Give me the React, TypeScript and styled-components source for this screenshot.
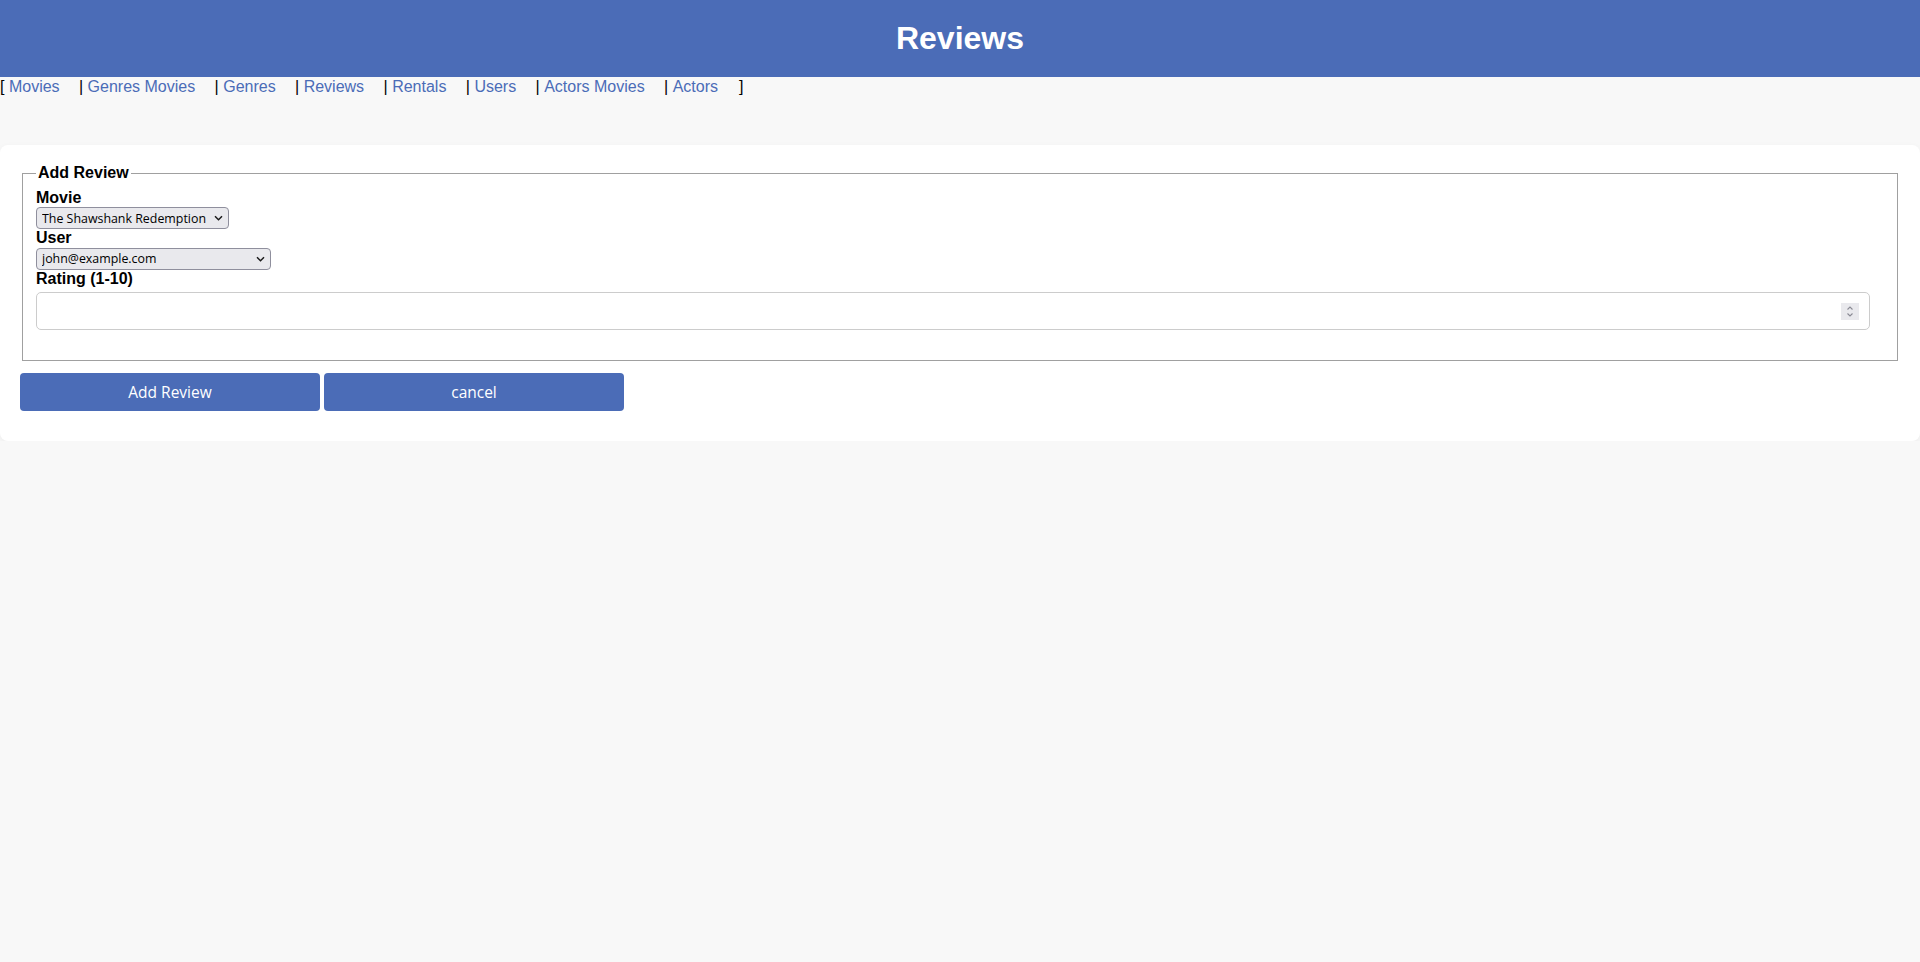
import React from "react";
import styled, { createGlobalStyle } from "styled-components";

const GlobalStyle = createGlobalStyle`
  html, body {
    margin: 0;
    padding: 0;
    background: #f8f8f8;
    font-family: "Liberation Sans", Arial, sans-serif;
    font-size: 16px;
    color: #000;
  }
`;

const Header = styled.header`
  background: #4b6cb7;
  padding: 20px 0;
  text-align: center;
`;

const Title = styled.h1`
  margin: 0;
  color: #fff;
  font-size: 32px;
  font-weight: bold;
  font-family: "Liberation Sans", Arial, sans-serif;
`;

const Nav = styled.nav`
  font-size: 16px;
  line-height: 18.4px;
  padding-top: 1px;
  white-space: nowrap;
`;

const NavLink = styled.a`
  color: #4b6cb7;
  text-decoration: none;
`;

const Sep = styled.span<{ $gap?: number }>`
  margin-left: ${(p) => p.$gap ?? 19.4}px;
`;

const Card = styled.main`
  margin-top: 49px;
  background: #fff;
  border-radius: 8px;
  box-shadow: 0 2px 6px rgba(0, 0, 0, 0.05);
  padding: 19px 20px 20px;
`;

const Fieldset = styled.fieldset`
  margin: 0 2px;
  padding: 6.6px 13px 11px;
  border: 1px solid #a0a0a0;
  border-radius: 0;
`;

const Legend = styled.legend`
  font-weight: bold;
  padding: 0 2px;
  font-size: 16px;
`;

const Label = styled.label`
  display: block;
  font-weight: bold;
  font-size: 16px;
  line-height: 18.4px;
`;

const SelectWrap = styled.div<{ $w: number }>`
  position: relative;
  width: ${(p) => p.$w}px;
  height: 22px;
`;

const Select = styled.select`
  display: block;
  appearance: none;
  width: 100%;
  height: 22px;
  box-sizing: border-box;
  font-family: "Open Sans", "Noto Sans", sans-serif;
  font-size: 12.4px;
  color: #000;
  background-color: #e9e9ed;
  border: 1px solid #8f8f9d;
  border-radius: 4px;
  padding: 0 20px 0 5px;
  margin: 0;
`;

const Chevron = styled.svg`
  position: absolute;
  right: 6px;
  top: 8px;
  width: 9px;
  height: 6px;
  pointer-events: none;
`;

const InputWrap = styled.div`
  position: relative;
  width: calc(100% - 14px);
  margin: 4px 0 19px;
`;

const NumberInput = styled.input`
  display: block;
  width: 100%;
  height: 38px;
  box-sizing: border-box;
  margin: 0;
  padding: 8px 10px;
  border: 1px solid #ccc;
  border-radius: 5px;
  font-size: 16px;
  font-family: "Liberation Sans", Arial, sans-serif;
  background: #fff;
  outline: none;
  &::-webkit-inner-spin-button,
  &::-webkit-outer-spin-button {
    -webkit-appearance: none;
    margin: 0;
  }
`;

const Spinner = styled.svg`
  position: absolute;
  right: 11px;
  top: 11px;
  width: 18px;
  height: 17px;
  background: #e9e9ed;
  pointer-events: none;
`;

const Actions = styled.div`
  display: flex;
  gap: 4px;
  margin-top: 12px;
  padding-bottom: 10px;
`;

const Button = styled.button`
  width: 300px;
  height: 38px;
  background: #4b6cb7;
  color: #fff;
  border: none;
  border-radius: 4px;
  font-family: "Open Sans", "Noto Sans", sans-serif;
  font-size: 15.5px;
  cursor: pointer;
  padding: 0;
`;

const links = [
  "Movies",
  "Genres Movies",
  "Genres",
  "Reviews",
  "Rentals",
  "Users",
  "Actors Movies",
  "Actors",
];

function ChevronDown() {
  return (
    <Chevron viewBox="0 0 9 6">
      <path d="M1 1.2l3.5 3.5L8 1.2" fill="none" stroke="#1a1a1a" strokeWidth="1.5" />
    </Chevron>
  );
}

export default function App() {
  return (
    <>
      <GlobalStyle />
      <Header>
        <Title>Reviews</Title>
      </Header>
      <Nav>
        [{"\u00a0"}
        {links.map((l, i) => (
          <React.Fragment key={l}>
            {i > 0 && <Sep>|{"\u00a0"}</Sep>}
            <NavLink href="#">{l}</NavLink>
          </React.Fragment>
        ))}
        <Sep $gap={21}>]</Sep>
      </Nav>
      <Card>
        <form onSubmit={(e) => e.preventDefault()}>
          <Fieldset>
            <Legend>Add Review</Legend>
            <Label htmlFor="movie">Movie</Label>
            <SelectWrap $w={193}>
              <Select id="movie" defaultValue="1">
                <option value="1">The Shawshank Redemption</option>
              </Select>
              <ChevronDown />
            </SelectWrap>
            <Label htmlFor="user">User</Label>
            <SelectWrap $w={235}>
              <Select id="user" defaultValue="1">
                <option value="1">john@example.com</option>
              </Select>
              <ChevronDown />
            </SelectWrap>
            <Label htmlFor="rating">Rating (1-10)</Label>
            <InputWrap>
              <NumberInput id="rating" type="number" min={1} max={10} />
              <Spinner viewBox="0 0 18 17">
                <path d="M6.5 6.5l2.5-2.5 2.5 2.5" fill="none" stroke="#8a8a94" strokeWidth="1.1" />
                <path d="M6.5 10.5l2.5 2.5 2.5-2.5" fill="none" stroke="#8a8a94" strokeWidth="1.1" />
              </Spinner>
            </InputWrap>
          </Fieldset>
          <Actions>
            <Button type="submit">Add Review</Button>
            <Button type="button">cancel</Button>
          </Actions>
        </form>
      </Card>
    </>
  );
}
